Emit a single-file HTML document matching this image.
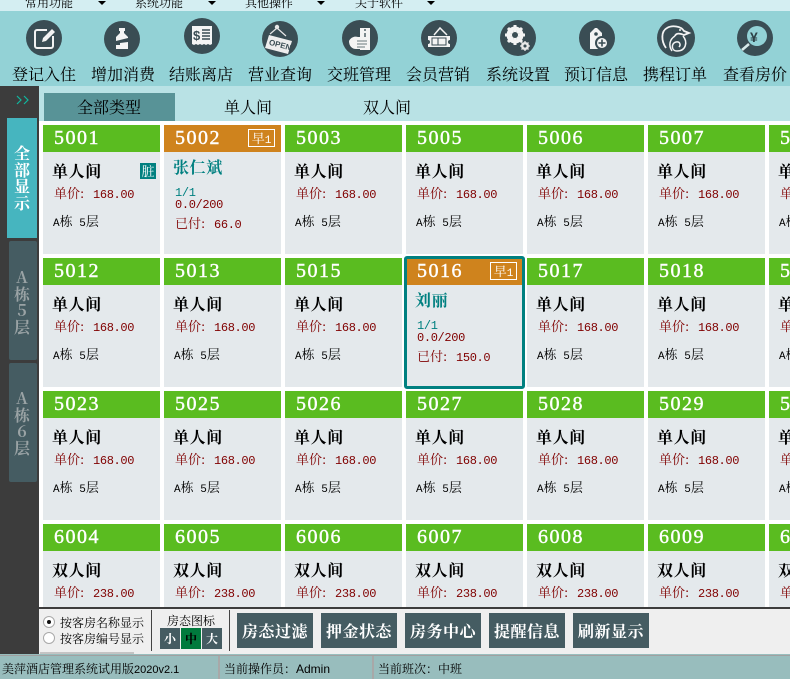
<!DOCTYPE html>
<html lang="zh"><head><meta charset="utf-8"><style>
html,body{margin:0;padding:0}
body{width:790px;height:679px;overflow:hidden;position:relative;background:#fff;font-family:"Liberation Mono","Noto Serif CJK SC",monospace;color:#000}
div,span,svg{position:absolute;white-space:nowrap}
b{position:static}
.m{top:-4px;font:12px/14px "Noto Serif CJK SC",serif}
.a{top:1px;width:0;height:0;border:4px solid transparent;border-top:4px solid #000;border-bottom:0}
.l{top:65px;width:80px;text-align:center;font:16px/18px "Noto Serif CJK SC",serif}
.t{top:98px;font:16px/18px "Noto Serif CJK SC",serif}
.c{width:117px;height:129px;background:#e4e9ec;overflow:hidden}
.h{left:0;top:0;width:117px;height:27px;background:#5abc20}
.o{background:#cf831d}
.n{left:11px;top:1px;font:400 20px/24px "Liberation Serif",serif;letter-spacing:1.5px;color:#fff;-webkit-text-stroke:.4px #fff}
.r{left:9px;top:36px;font:700 16px/20px "Noto Serif CJK SC",serif;letter-spacing:.6px}
.p{left:11px;top:60px;font-size:12px;letter-spacing:-.35px;line-height:15px;color:#800000}
.p b,.f b{display:inline-block;width:39px;letter-spacing:0;font:400 13px/15px "Noto Serif CJK SC",serif}
.b{left:10px;top:88px;font-size:11px;line-height:15px}
.b b{font:400 13px/15px "Noto Serif CJK SC",serif}
.g{left:9px;top:32px;font:700 16px/20px "Noto Serif CJK SC",serif;letter-spacing:.6px;color:#008080}
.q{left:11px;top:61px;font-size:12px;letter-spacing:-.35px;line-height:14px;color:#008080}
.d{left:11px;top:73px;font-size:12px;letter-spacing:-.35px;line-height:14px;color:#800000}
.f{left:11px;top:90px;font-size:12px;letter-spacing:-.35px;line-height:15px;color:#800000}
.e{left:84px;top:4px;width:25px;height:16px;border:1px solid #fff;color:#fff;font-size:11px;line-height:16px;text-align:center}
.e b{font:400 13px/16px "Noto Serif CJK SC",serif}
.s{width:30px;text-align:center;font:700 16px/16.500px "Noto Serif CJK SC",serif;white-space:nowrap}
.u{top:613px;width:76px;height:35px;background:#455c62;color:#fff;text-align:center;font:700 16px/35px "Noto Serif CJK SC",serif;letter-spacing:.5px}
.x{top:628px;width:20px;height:21px;background:#455c62;color:#fff;text-align:center;font:700 12px/21px "Noto Serif CJK SC",serif}
.v{top:615px;font:12px/15px "Noto Serif CJK SC",serif}
.w{top:662px;font:12px/14px "Liberation Sans","Noto Serif CJK SC",serif}
.w i{font-style:normal;font-size:11px}
</style></head><body>

<div style="left:0;top:0;width:790px;height:11px;background:#d4eef2;overflow:hidden">
<span class="m" style="left:25px">常用功能</span><span class="a" style="left:98px"></span>
<span class="m" style="left:135px">系统功能</span><span class="a" style="left:208px"></span>
<span class="m" style="left:245px">其他操作</span><span class="a" style="left:317px"></span>
<span class="m" style="left:355px">关于软件</span><span class="a" style="left:427px"></span>
</div>

<div style="left:0;top:11px;width:790px;height:75px;background:#93d2d6"></div>
<div style="left:0;top:86px;width:790px;height:35px;background:#b9e2e5"></div>

<svg style="left:0;top:11px" width="790" height="60" viewBox="0 11 790 60">
<g fill="#3a4d54">
<circle cx="44" cy="38" r="18"/><circle cx="122" cy="39" r="18"/><circle cx="202" cy="36" r="18"/><circle cx="280" cy="39" r="18"/><circle cx="360" cy="38" r="18"/><circle cx="439" cy="38" r="18"/><circle cx="518" cy="38" r="18"/><circle cx="597" cy="38" r="18"/><circle cx="676" cy="38" r="19"/><circle cx="755" cy="38" r="18"/>
</g>
<path d="M47 30H37a2 2 0 0 0-2 2v14a2 2 0 0 0 2 2h14a2 2 0 0 0 2-2V36" fill="none" stroke="#f2f2f2" stroke-width="2"/>
<path d="M42 42l1-4 9-9 3 3-9 9z" fill="#f2f2f2"/>
<path d="M119 28h6v3h-1v2l4 4v12h-12V37l4-4v-2h-1z" fill="#f4f4f4"/>
<path d="M116 41l12-3v4l-8 1v2h-4z" fill="#3a4d54"/>
<path d="M192 26h20v18l-2 1-2-1-2 1-2-1-2 1-2-1-2 1-2-1-2 1-2-1z" fill="#f4f4f4"/>
<text x="193" y="40" font-family="Liberation Sans" font-weight="700" font-size="13" fill="#3a4d54">$</text>
<path d="M202 30h8M202 33h8M202 36h8M202 39h8" stroke="#3a4d54" stroke-width="1.500"/>
<circle cx="277" cy="27" r="2.200" fill="#e8e8e8"/>
<path d="M277 28l-7 6M277 28l9 8" stroke="#e8e8e8" stroke-width="1.200" fill="none"/>
<path d="M269 35l23 6-4 13-23-6z" fill="#eeeeee"/>
<text x="269" y="47" font-family="Liberation Sans" font-weight="700" font-size="8" fill="#3a4d54" transform="rotate(15 278 44)">OPEN</text>
<path d="M360 28h10v22h-10z" fill="#f4f4f4"/>
<path d="M365 29v2M365 33v5" stroke="#3a4d54" stroke-width="1.300"/>
<path d="M349 41c2-4 6-5 9-4h8c1 0 1 2 0 2h2c1 0 1 3 0 3v1c1 0 1 3-1 3v1c-1 2-3 2-5 2h-6c-4 0-7-3-7-8z" fill="#f4f4f4"/>
<path d="M357 41h10M357 44h10M357 47h8" stroke="#3a4d54" stroke-width=".8"/>
<path d="M434 35l6-7 7 7" fill="none" stroke="#f4f4f4" stroke-width="1.500"/>
<path d="M428 36h22v4a2 2 0 0 0 0 4v3h-22v-3a2 2 0 0 0 0-4z" fill="#f4f4f4"/>
<rect x="432" y="38" width="6" height="7" fill="none" stroke="#3a4d54" stroke-width="1"/>
<rect x="438" y="38" width="8" height="7" fill="none" stroke="#3a4d54" stroke-width="1"/>
<circle cx="515" cy="35" r="6.500" fill="none" stroke="#f4f4f4" stroke-width="4"/>
<path d="M515 25v20M505 35h20M508 28l14 14M522 28l-14 14" stroke="#f4f4f4" stroke-width="3"/>
<circle cx="515" cy="35" r="3" fill="#3a4d54"/>
<circle cx="525" cy="46" r="3" fill="none" stroke="#e8e8e8" stroke-width="2"/>
<path d="M525 41v10M520 46h10M521.500 42.500l7 7M528.500 42.500l-7 7" stroke="#e8e8e8" stroke-width="1.300"/>
<circle cx="525" cy="46" r="1.500" fill="#3a4d54"/>
<path d="M590 49V33l5-5h2l5 5v16z" fill="#f4f4f4"/>
<circle cx="596" cy="34" r="1.800" fill="#3a4d54"/>
<circle cx="602" cy="43" r="6" fill="#f4f4f4" stroke="#3a4d54" stroke-width="2"/>
<path d="M598.500 43h7M602 39.500v7" stroke="#3a4d54" stroke-width="1.600"/>
<path d="M666 48C661 41 661 31 667 28C672 25 681 26 684 31L689 33L684 35C680 33 676 33 675 36" fill="none" stroke="#f4f4f4" stroke-width="1.800"/>
<path d="M672 51C668 45 670 39 675 36M683 36C688 42 686 51 677 51C671 51 671 43 676 42C680 41 681 45 679 47" fill="none" stroke="#f4f4f4" stroke-width="1.500"/>
<circle cx="680" cy="30" r="1" fill="#f4f4f4"/>
<circle cx="757" cy="36" r="10" fill="#93d2d6"/>
<path d="M749 44l-7 6" stroke="#d8eaea" stroke-width="2.500"/>
<text x="750" y="42" font-family="Liberation Sans" font-weight="700" font-size="14" fill="#2d4046">¥</text>
</svg>

<div class="l" style="left:4px">登记入住</div>
<div class="l" style="left:83px">增加消费</div>
<div class="l" style="left:161px">结账离店</div>
<div class="l" style="left:240px">营业查询</div>
<div class="l" style="left:319px">交班管理</div>
<div class="l" style="left:398px">会员营销</div>
<div class="l" style="left:478px">系统设置</div>
<div class="l" style="left:556px">预订信息</div>
<div class="l" style="left:635px">携程订单</div>
<div class="l" style="left:715px">查看房价</div>

<div style="left:44px;top:93px;width:131px;height:28px;background:#589397"></div>
<div class="t" style="left:77px">全部类型</div>
<div class="t" style="left:224px">单人间</div>
<div class="t" style="left:363px">双人间</div>

<div style="left:0;top:86px;width:39px;height:568px;background:#3c3c3c"></div>
<svg style="left:16px;top:95px" width="16" height="10"><path d="M1 1l4 4-4 4M8 1l4 4-4 4" fill="none" stroke="#10b8a0" stroke-width="1.200"/></svg>
<div style="left:7px;top:118px;width:30px;height:120px;background:#46b5bf"><div class="s" style="top:27px;left:0;color:#fff">全<br>部<br>显<br>示</div></div>
<div style="left:9px;top:241px;width:28px;height:119px;background:#455c62;border-radius:2px"><div class="s" style="top:28px;left:-2px;color:#9aa3a5">A<br>栋<br>5<br>层</div></div>
<div style="left:9px;top:363px;width:28px;height:119px;background:#455c62;border-radius:2px"><div class="s" style="top:27px;left:-2px;color:#9aa3a5">A<br>栋<br>6<br>层</div></div>

<div style="left:40px;top:121px;width:750px;height:486px;overflow:hidden;background:#fff">
<div style="left:0;top:0;width:750px;height:486px">

<div class="c" style="left:3px;top:4px"><div class="h"></div><div class="n">5001</div><div class="r">单人间</div><div style="left:97px;top:38px;width:16px;height:16px;background:#008080;color:#fff;font:13px/16px 'Noto Serif CJK SC',serif;text-align:center">脏</div><div class="p"><b>单价:</b>168.00</div><div class="b">A<b>栋</b> 5<b>层</b></div></div>
<div class="c" style="left:124px;top:4px"><div class="h o"></div><div class="n">5002</div><div class="e"><b>早</b>1</div><div class="g">张仁斌</div><div class="q">1/1</div><div class="d">0.0/200</div><div class="f"><b>已付:</b>66.0</div></div>
<div class="c" style="left:245px;top:4px"><div class="h"></div><div class="n">5003</div><div class="r">单人间</div><div class="p"><b>单价:</b>168.00</div><div class="b">A<b>栋</b> 5<b>层</b></div></div>
<div class="c" style="left:366px;top:4px"><div class="h"></div><div class="n">5005</div><div class="r">单人间</div><div class="p"><b>单价:</b>168.00</div><div class="b">A<b>栋</b> 5<b>层</b></div></div>
<div class="c" style="left:487px;top:4px"><div class="h"></div><div class="n">5006</div><div class="r">单人间</div><div class="p"><b>单价:</b>168.00</div><div class="b">A<b>栋</b> 5<b>层</b></div></div>
<div class="c" style="left:608px;top:4px"><div class="h"></div><div class="n">5007</div><div class="r">单人间</div><div class="p"><b>单价:</b>168.00</div><div class="b">A<b>栋</b> 5<b>层</b></div></div>
<div class="c" style="left:729px;top:4px"><div class="h"></div><div class="n">5008</div><div class="r">单人间</div><div class="p"><b>单价:</b>168.00</div><div class="b">A<b>栋</b> 5<b>层</b></div></div>

<div class="c" style="left:3px;top:137px"><div class="h"></div><div class="n">5012</div><div class="r">单人间</div><div class="p"><b>单价:</b>168.00</div><div class="b">A<b>栋</b> 5<b>层</b></div></div>
<div class="c" style="left:124px;top:137px"><div class="h"></div><div class="n">5013</div><div class="r">单人间</div><div class="p"><b>单价:</b>168.00</div><div class="b">A<b>栋</b> 5<b>层</b></div></div>
<div class="c" style="left:245px;top:137px"><div class="h"></div><div class="n">5015</div><div class="r">单人间</div><div class="p"><b>单价:</b>168.00</div><div class="b">A<b>栋</b> 5<b>层</b></div></div>
<div class="c" style="left:366px;top:137px"><div class="h o"></div><div class="n">5016</div><div class="e"><b>早</b>1</div><div class="g">刘丽</div><div class="q">1/1</div><div class="d">0.0/200</div><div class="f"><b>已付:</b>150.0</div></div>
<div class="c" style="left:487px;top:137px"><div class="h"></div><div class="n">5017</div><div class="r">单人间</div><div class="p"><b>单价:</b>168.00</div><div class="b">A<b>栋</b> 5<b>层</b></div></div>
<div class="c" style="left:608px;top:137px"><div class="h"></div><div class="n">5018</div><div class="r">单人间</div><div class="p"><b>单价:</b>168.00</div><div class="b">A<b>栋</b> 5<b>层</b></div></div>
<div class="c" style="left:729px;top:137px"><div class="h"></div><div class="n">5019</div><div class="r">单人间</div><div class="p"><b>单价:</b>168.00</div><div class="b">A<b>栋</b> 5<b>层</b></div></div>
<div style="left:364px;top:135px;width:115px;height:127px;border:3px solid #008080;border-radius:3px"></div>

<div class="c" style="left:3px;top:270px"><div class="h"></div><div class="n">5023</div><div class="r">单人间</div><div class="p"><b>单价:</b>168.00</div><div class="b">A<b>栋</b> 5<b>层</b></div></div>
<div class="c" style="left:124px;top:270px"><div class="h"></div><div class="n">5025</div><div class="r">单人间</div><div class="p"><b>单价:</b>168.00</div><div class="b">A<b>栋</b> 5<b>层</b></div></div>
<div class="c" style="left:245px;top:270px"><div class="h"></div><div class="n">5026</div><div class="r">单人间</div><div class="p"><b>单价:</b>168.00</div><div class="b">A<b>栋</b> 5<b>层</b></div></div>
<div class="c" style="left:366px;top:270px"><div class="h"></div><div class="n">5027</div><div class="r">单人间</div><div class="p"><b>单价:</b>168.00</div><div class="b">A<b>栋</b> 5<b>层</b></div></div>
<div class="c" style="left:487px;top:270px"><div class="h"></div><div class="n">5028</div><div class="r">单人间</div><div class="p"><b>单价:</b>168.00</div><div class="b">A<b>栋</b> 5<b>层</b></div></div>
<div class="c" style="left:608px;top:270px"><div class="h"></div><div class="n">5029</div><div class="r">单人间</div><div class="p"><b>单价:</b>168.00</div><div class="b">A<b>栋</b> 5<b>层</b></div></div>
<div class="c" style="left:729px;top:270px"><div class="h"></div><div class="n">5030</div><div class="r">单人间</div><div class="p"><b>单价:</b>168.00</div><div class="b">A<b>栋</b> 5<b>层</b></div></div>

<div class="c" style="left:3px;top:403px"><div class="h"></div><div class="n">6004</div><div class="r">双人间</div><div class="p"><b>单价:</b>238.00</div></div>
<div class="c" style="left:124px;top:403px"><div class="h"></div><div class="n">6005</div><div class="r">双人间</div><div class="p"><b>单价:</b>238.00</div></div>
<div class="c" style="left:245px;top:403px"><div class="h"></div><div class="n">6006</div><div class="r">双人间</div><div class="p"><b>单价:</b>238.00</div></div>
<div class="c" style="left:366px;top:403px"><div class="h"></div><div class="n">6007</div><div class="r">双人间</div><div class="p"><b>单价:</b>238.00</div></div>
<div class="c" style="left:487px;top:403px"><div class="h"></div><div class="n">6008</div><div class="r">双人间</div><div class="p"><b>单价:</b>238.00</div></div>
<div class="c" style="left:608px;top:403px"><div class="h"></div><div class="n">6009</div><div class="r">双人间</div><div class="p"><b>单价:</b>238.00</div></div>
<div class="c" style="left:729px;top:403px"><div class="h"></div><div class="n">6010</div><div class="r">双人间</div><div class="p"><b>单价:</b>238.00</div></div>

</div></div>

<div style="left:39px;top:607px;width:751px;height:2px;background:#3c3c3c"></div>
<div style="left:39px;top:609px;width:751px;height:45px;background:#efefef"></div>

<svg style="left:42px;top:614px" width="14" height="32"><circle cx="7" cy="8" r="5.500" fill="#fff" stroke="#a8a8a8"/><circle cx="7" cy="8" r="2" fill="#111"/><circle cx="7" cy="24" r="5.500" fill="#fff" stroke="#a8a8a8"/></svg>
<div class="v" style="left:60px">按客房名称显示</div>
<div class="v" style="left:60px;top:631px">按客房编号显示</div>
<div style="left:151px;top:610px;width:1px;height:41px;background:#444"></div>
<div style="left:229px;top:610px;width:1px;height:41px;background:#444"></div>
<div class="v" style="left:167px;top:613px">房态图标</div>
<div class="x" style="left:160px">小</div>
<div class="x" style="left:181px;background:#007a3d;color:#000">中</div>
<div class="x" style="left:202px">大</div>
<div class="u" style="left:237px">房态过滤</div>
<div class="u" style="left:321px">押金状态</div>
<div class="u" style="left:405px">房务中心</div>
<div class="u" style="left:489px">提醒信息</div>
<div class="u" style="left:573px">刷新显示</div>

<div style="left:0;top:654px;width:790px;height:25px;background:#98bdbd"></div>
<div style="left:0;top:655px;width:790px;height:1px;background:#a0a0a0"></div>
<div style="left:40px;top:652px;width:94px;height:2px;background:#c4c4c4"></div>
<div style="left:218px;top:656px;width:2px;height:23px;background:#a8a8a8"></div>
<div style="left:372px;top:656px;width:2px;height:23px;background:#a8a8a8"></div>
<div class="w" style="left:2px">美萍酒店管理系统试用版<i>2020v2.1</i></div>
<div class="w" style="left:224px">当前操作员：Admin</div>
<div class="w" style="left:378px">当前班次：中班</div>

</body></html>
